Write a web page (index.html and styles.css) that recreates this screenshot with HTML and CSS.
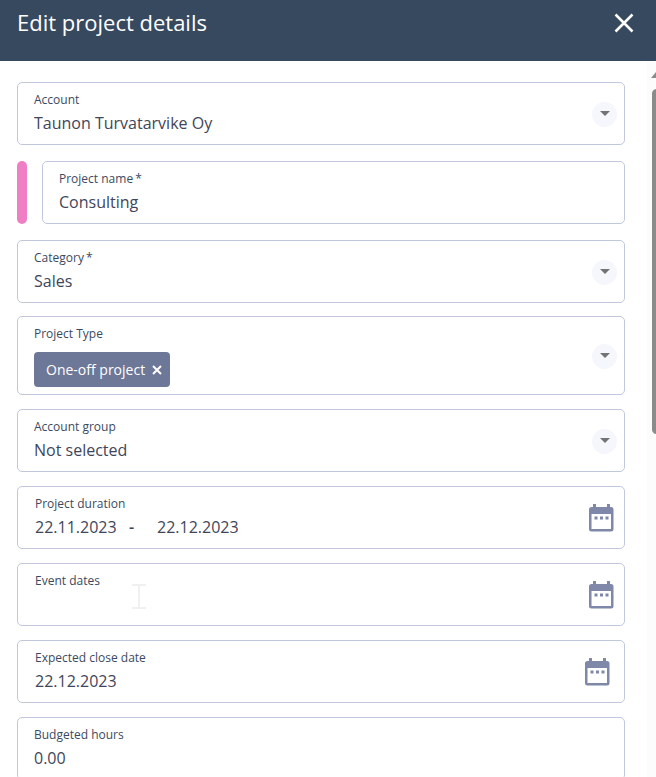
FILE: index.html
```html
<!DOCTYPE html>
<html lang="en">
<head>
    <meta charset="UTF-8">
    <meta name="viewport" content="width=device-width, initial-scale=1">
    <title>Edit project details</title>
    <link rel="stylesheet" href="styles.css">
</head>
<body>
<svg class="sprite" aria-hidden="true">
    <symbol id="calendar" viewBox="0 0 25 28">
        <path fill-rule="evenodd" d="M4 0h3v3h11V0h3v3h1a2.500 2.500 0 0 1 2.500 2.500V25a2.500 2.500 0 0 1-2.500 2.500H2.500A2.500 2.500 0 0 1 0 25V5.500A2.500 2.500 0 0 1 2.500 3H4zM2.500 10v15H22V10z"/>
        <path d="M5.500 12.500h3v3h-3zM11 12.500h3v3h-3zM16.500 12.500h3v3h-3z"/>
    </symbol>
    <symbol id="arrow" viewBox="0 0 12 6">
        <path d="M1 0h10L6 5z"/>
    </symbol>
</svg>
<div class="dialog">
    <header class="dialog-header">
        <h1>Edit project details</h1>
        <button class="close" type="button" aria-label="Close">
            <svg width="20" height="20" viewBox="0 0 20 20"><path d="M1.500 1.500l17 17M18.500 1.500l-17 17"/></svg>
        </button>
    </header>
    <div class="dialog-body">
        <form class="form">
            <div class="group basics">
                <div class="field">
                    <div class="field-text">
                        <label for="account">Account</label>
                        <select id="account"><option>Taunon Turvatarvike Oy</option></select>
                    </div>
                    <span class="arrow"><svg width="12" height="6"><use href="#arrow"/></svg></span>
                </div>
                <div class="name-row">
                    <span class="color-bar"></span>
                    <div class="field">
                        <div class="field-text">
                            <label for="name">Project name<span class="star">*</span></label>
                            <input id="name" type="text" value="Consulting">
                        </div>
                    </div>
                </div>
                <div class="field">
                    <div class="field-text">
                        <label for="category">Category<span class="star">*</span></label>
                        <select id="category"><option>Sales</option></select>
                    </div>
                    <span class="arrow"><svg width="12" height="6"><use href="#arrow"/></svg></span>
                </div>
            </div>
            <div class="group">
                <div class="field">
                    <div class="field-text">
                        <span class="label">Project Type</span>
                        <div class="chip">
                            <span>One-off project</span>
                            <button type="button" aria-label="Remove One-off project">
                                <svg width="10" height="10" viewBox="0 0 10 10"><path d="M1 1l8 8M9 1l-8 8"/></svg>
                            </button>
                        </div>
                    </div>
                    <button class="arrow" type="button" aria-label="Choose project type"><svg width="12" height="6"><use href="#arrow"/></svg></button>
                </div>
                <div class="field">
                    <div class="field-text">
                        <label for="group">Account group</label>
                        <select id="group"><option>Not selected</option></select>
                    </div>
                    <span class="arrow"><svg width="12" height="6"><use href="#arrow"/></svg></span>
                </div>
                <div class="field date">
                    <div class="field-text">
                        <label for="start">Project duration</label>
                        <div class="range">
                            <input id="start" type="text" value="22.11.2023">
                            <span>-</span>
                            <input type="text" value="22.12.2023" aria-label="Project end date">
                        </div>
                    </div>
                    <button class="calendar" type="button" aria-label="Pick project duration"><svg width="25" height="28"><use href="#calendar"/></svg></button>
                </div>
                <div class="field date">
                    <div class="field-text">
                        <label for="event">Event dates</label>
                        <input id="event" type="text">
                    </div>
                    <button class="calendar" type="button" aria-label="Pick event dates"><svg width="25" height="28"><use href="#calendar"/></svg></button>
                    <svg class="text-cursor" width="14" height="25" viewBox="0 0 14 25" aria-hidden="true"><path d="M0 1h14M7 2v21M0 24h14"/></svg>
                </div>
                <div class="field date single">
                    <div class="field-text">
                        <label for="close-date">Expected close date</label>
                        <input id="close-date" type="text" value="22.12.2023">
                    </div>
                    <button class="calendar" type="button" aria-label="Pick expected close date"><svg width="25" height="28"><use href="#calendar"/></svg></button>
                </div>
                <div class="field">
                    <div class="field-text">
                        <label for="hours">Budgeted hours</label>
                        <input id="hours" type="text" value="0.00">
                    </div>
                </div>
            </div>
        </form>
        <div class="scrollbar" aria-hidden="true">
            <svg width="10" height="6" viewBox="0 0 10 6"><path d="M0 6l5-6 5 6z"/></svg>
            <div class="thumb"></div>
        </div>
    </div>
</div>
</body>
</html>
```
FILE: styles.css
```css
* {
    box-sizing: border-box;
    margin: 0;
    padding: 0;
}

body {
    font-family: "Open Sans", "Noto Sans", sans-serif;
    font-size: 16px;
    color: #3f465a;
    background: #fff;
}

button {
    border: 0;
    background: none;
    cursor: pointer;
}

svg {
    display: block;
}

.sprite {
    display: none;
}

.dialog {
    display: flex;
    flex-direction: column;
    height: 100vh;
    overflow: hidden;
}

/* header */
.dialog-header {
    display: flex;
    justify-content: space-between;
    align-items: flex-start;
    flex: none;
    padding: 8px 22px 23px 17px;
    background: #37495f;
    color: #fff;
}

.dialog-header h1 {
    font-size: 22px;
    font-weight: 500;
    line-height: 28px;
}

.close {
    padding: 5px 0;
}

.close path {
    fill: none;
    stroke: #fff;
    stroke-width: 2.5;
}

.dialog-body {
    display: flex;
    flex: 1;
    min-height: 0;
    overflow: hidden;
}

.form {
    flex: 1;
    min-width: 0;
    padding: 21px 22px 21px 17px;
}

.group {
    display: flex;
    flex-direction: column;
    gap: 14px;
}

.basics {
    gap: 16px;
    margin-bottom: 13px;
}

/* fields */
.field {
    position: relative;
    display: flex;
    align-items: center;
    flex: 1;
    min-width: 0;
    padding: 8px 7px 7px 16px;
    border: 1px solid #c1c8de;
    border-radius: 5px;
}

.field-text {
    flex: 1;
    min-width: 0;
}

.field label,
.field .label {
    display: block;
    font-size: 12px;
    line-height: 18px;
    color: #3b4a60;
}

.star {
    margin-left: 2px;
}

.field input,
.field select {
    display: block;
    width: 100%;
    height: 28px;
    border: 0;
    outline: 0;
    appearance: none;
    background: none;
    font-family: inherit;
    font-size: 16px;
    color: inherit;
}

.name-row {
    display: flex;
    gap: 15px;
}

.color-bar {
    width: 10px;
    border-radius: 5px;
    background: #ee7fc4;
}

.arrow {
    display: flex;
    align-items: center;
    justify-content: center;
    width: 25px;
    height: 25px;
    border-radius: 50%;
    background: #f6f7fc;
    fill: #737375;
}

.chip {
    display: inline-flex;
    align-items: center;
    gap: 7px;
    height: 35px;
    margin-top: 9px;
    padding: 0 8px 0 12px;
    border-radius: 4px;
    background: #6d7798;
    color: #fff;
    font-size: 14px;
    font-weight: 500;
    vertical-align: top;
}

.chip path {
    fill: none;
    stroke: #fff;
    stroke-width: 2;
}

.date {
    padding-left: 17px;
    padding-right: 10px;
}

.single {
    padding-right: 14px;
}

.calendar {
    fill: #7f88a8;
}

.range {
    display: flex;
    align-items: center;
}

.range input {
    width: 94px;
}

.range span {
    width: 28px;
    font-weight: 600;
}

.text-cursor {
    position: absolute;
    left: 114px;
    top: 20px;
    fill: none;
    stroke: #f0f0f0;
    stroke-width: 2;
}

/* scrollbar */
.scrollbar {
    display: flex;
    flex-direction: column;
    gap: 11px;
    width: 9px;
    padding: 11px 0 0 4px;
    overflow: hidden;
    background: #fcfcfc;
    fill: #8b8b8b;
}

.scrollbar svg {
    flex: none;
}

.thumb {
    width: 9px;
    height: 49%;
    margin-left: 1px;
    border-radius: 5px;
    background: #8b8b8b;
}
```
